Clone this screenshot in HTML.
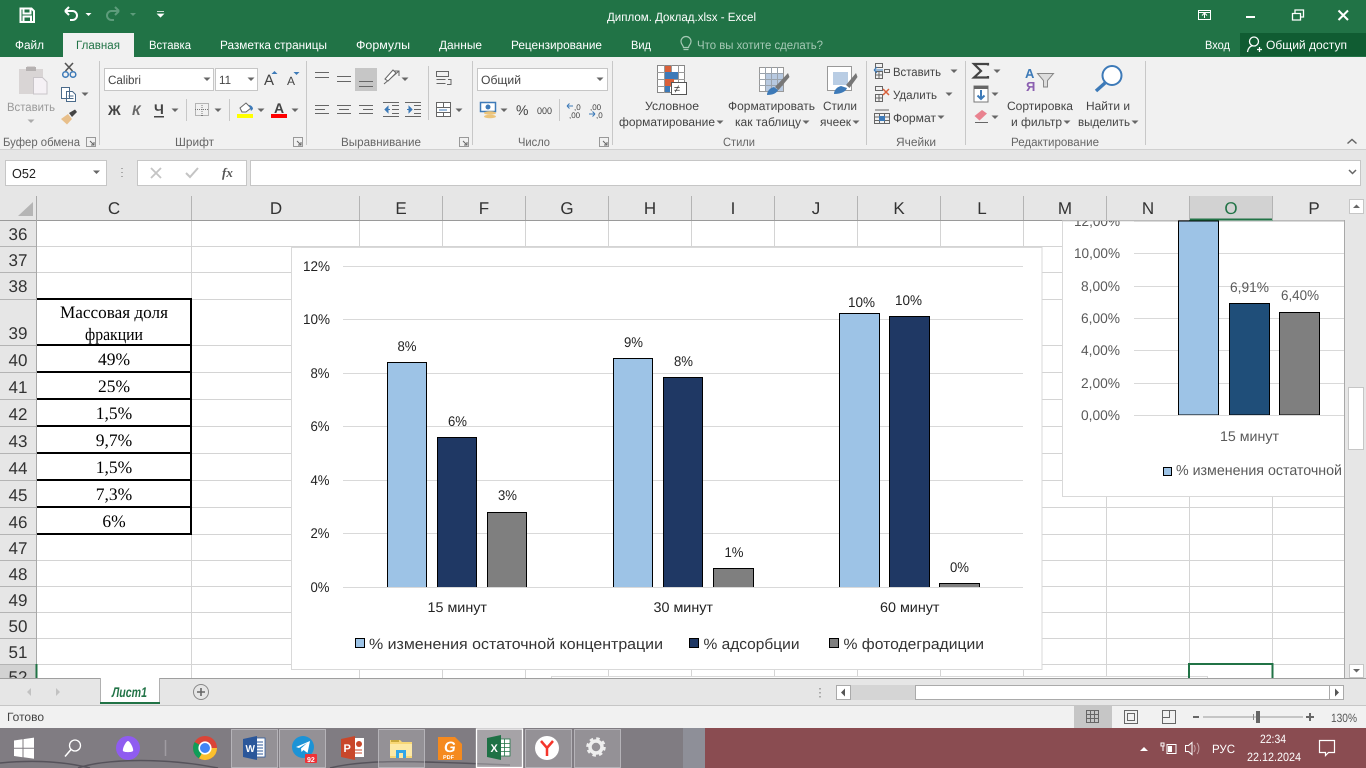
<!DOCTYPE html>
<html lang="ru"><head><meta charset="utf-8"><title>Диплом. Доклад.xlsx - Excel</title>
<style>
html,body{margin:0;padding:0;width:1366px;height:768px;overflow:hidden;background:#fff}
svg{display:block;font-family:"Liberation Sans",sans-serif}
.t{font-size:12px;fill:#444}
.l{font-size:12px;fill:#666}
.w{font-size:12px;fill:#fff}
.h{font-size:17px;fill:#333}
.c{font-size:14px;fill:#222}
.lg{font-size:15px;fill:#333}
.r{font-size:14px;fill:#595959}
.s{font-family:"Liberation Serif",serif;font-size:17.5px;fill:#000}
.k{fill:#444}
.a{fill:#666}
</style></head><body>
<svg width="1366" height="768" viewBox="0 0 1366 768" xmlns="http://www.w3.org/2000/svg" text-rendering="geometricPrecision">
<defs>
<g id="dd"><path d="M-3.500-1.500h7L0 2z" fill="#666"/></g>
<g id="lau"><path d="M-4.500-4.500h9v9h-9z" fill="none" stroke="#999"/><path d="M-1-1L3 3M3 0v3H0" fill="none" stroke="#666"/></g>
</defs>

<!-- title bar -->
<rect width="1366" height="57" fill="#217346"/>
<path d="M20.500 8.500h11l2.500 2.500v11h-13.500zM23.500 8.500v5h7v-5M23.500 22v-5.500h7.500V22" fill="none" stroke="#fff" stroke-width="2"/>
<path d="M65 11l4-4M65 11l4 4M65 11h7.500a4.500 4.500 0 0 1 0 9H70" fill="none" stroke="#fff" stroke-width="2"/>
<path d="M85.500 13h6l-3 3z" fill="#fff"/>
<path d="M119 11l-4-4M119 11l-4 4M119 11h-7.500a4.500 4.500 0 0 0 0 9H114" fill="none" stroke="#5d9c7b" stroke-width="2"/>
<path d="M130 13h6l-3 3z" fill="#5d9c7b"/>
<path d="M157 11.500h7M157.500 14h6l-3 3z" fill="#fff" stroke="#fff" stroke-width=".8"/>
<text class="w" x="607" y="21" textLength="149" lengthAdjust="spacingAndGlyphs">Диплом. Доклад.xlsx - Excel</text>
<path d="M1198.500 10.500h12v9h-12zM1198.500 12.500h12M1204.500 18v-4.500M1202 15.500l2.500-2.500 2.500 2.500" fill="none" stroke="#fff"/>
<rect x="1246" y="16" width="9" height="2" fill="#fff"/>
<path d="M1292.500 13.500h8v6.500h-8zM1295 13v-3h8.500v7h-3" fill="none" stroke="#fff" stroke-width="1.300"/>
<path d="M1338.500 10.500l9.500 9.500M1348 10.500L1338.500 20" stroke="#fff" stroke-width="2"/>

<!-- tabs -->
<rect x="63" y="33" width="71" height="24" fill="#f1f1f1"/>
<text class="w" x="15" y="49" textLength="29" lengthAdjust="spacingAndGlyphs">Файл</text>
<text x="76" y="49" font-size="12" fill="#217346" textLength="44" lengthAdjust="spacingAndGlyphs">Главная</text>
<text class="w" x="149" y="49" textLength="42" lengthAdjust="spacingAndGlyphs">Вставка</text>
<text class="w" x="220" y="49" textLength="107" lengthAdjust="spacingAndGlyphs">Разметка страницы</text>
<text class="w" x="356" y="49" textLength="54" lengthAdjust="spacingAndGlyphs">Формулы</text>
<text class="w" x="439" y="49" textLength="43" lengthAdjust="spacingAndGlyphs">Данные</text>
<text class="w" x="511" y="49" textLength="91" lengthAdjust="spacingAndGlyphs">Рецензирование</text>
<text class="w" x="631" y="49" textLength="20" lengthAdjust="spacingAndGlyphs">Вид</text>
<path d="M683.500 47.500c0-2-2.500-3-2.500-6a5 5 0 0 1 10 0c0 3-2.500 4-2.500 6zM683.500 49.500h5" fill="none" stroke="#a5c9b5" stroke-width="1.200"/>
<text x="697" y="49" font-size="12" fill="#a5c9b5" textLength="126" lengthAdjust="spacingAndGlyphs">Что вы хотите сделать?</text>
<text class="w" x="1205" y="49" textLength="25" lengthAdjust="spacingAndGlyphs">Вход</text>
<rect x="1240" y="33" width="126" height="23" fill="#105c32"/>
<circle cx="1254" cy="41.500" r="4.500" fill="none" stroke="#fff" stroke-width="1.300"/>
<path d="M1247.500 52c.5-4 3-6 5.500-6.500M1257 49.500h5M1259.500 47v5" fill="none" stroke="#fff" stroke-width="1.300"/>
<text class="w" x="1266" y="49" textLength="81" lengthAdjust="spacingAndGlyphs">Общий доступ</text>

<!-- ribbon -->
<rect y="57" width="1366" height="92" fill="#f1f1f1"/>
<rect y="149" width="1366" height="47" fill="#e6e6e6"/>
<rect y="149" width="1366" height="1" fill="#d0d0d0"/>
<g stroke="#c8c8c8"><path d="M99.500 61v84M306.500 61v84M472.500 61v84M612.500 61v84M866.500 61v84M965.500 61v84M1145.500 61v84"/></g>

<!-- clipboard -->
<path d="M19 69h8v-3h8v3h8v25H19z" fill="#d9d5d5"/><rect x="26" y="67" width="10" height="4" fill="#b5b1b1"/>
<path d="M33.500 77.500h9l4.500 4.500v12H33.500z" fill="#f5f1f5" stroke="#c9c5c9"/>
<text x="7" y="111" font-size="12" fill="#9a9a9a" textLength="48" lengthAdjust="spacingAndGlyphs">Вставить</text>
<use href="#dd" x="31" y="121" opacity=".5"/>
<path d="M65.500 71L73 63M72.500 71L65 63" stroke="#555" stroke-width="1.600"/>
<circle cx="65.500" cy="74.500" r="2.800" fill="none" stroke="#3d7ab8" stroke-width="1.500"/><circle cx="73" cy="74.500" r="2.800" fill="none" stroke="#3d7ab8" stroke-width="1.500"/>
<path d="M61.500 87.500h8v11h-8zM66.500 91.500h6l3 3v7h-9z" fill="#fff" stroke="#4a6a8a"/><path d="M68.500 96h5M68.500 98.500h5" stroke="#4a6a8a"/>
<use href="#dd" x="85" y="94"/>
<path d="M61 119l7-5 4 5-5 5.500z" fill="#e8bf8a"/><path d="M69 113l6-3.500 2 2.500-5 5z" fill="#444"/>
<text class="l" x="3" y="146" textLength="77" lengthAdjust="spacingAndGlyphs">Буфер обмена</text>
<use href="#lau" x="91" y="142"/>

<!-- font -->
<rect x="104.500" y="68.500" width="109" height="22" fill="#fff" stroke="#c6c6c6"/>
<rect x="215.500" y="68.500" width="42" height="22" fill="#fff" stroke="#c6c6c6"/>
<text class="t" x="108" y="84" textLength="33" lengthAdjust="spacingAndGlyphs">Calibri</text>
<text class="t" x="219" y="84" textLength="12" lengthAdjust="spacingAndGlyphs">11</text>
<use href="#dd" x="207" y="79"/><use href="#dd" x="251" y="79"/>
<text class="k" x="264" y="85" font-size="15">A</text><path d="M271.500 74h6l-3-3z" fill="#3d7ab8"/>
<text class="k" x="287" y="85" font-size="12">A</text><path d="M293.500 72h6l-3 3z" fill="#3d7ab8"/>
<text class="k" x="108" y="115" font-size="14" font-weight="bold">Ж</text>
<text x="132" y="115" font-size="14" font-weight="bold" font-style="italic" fill="#666">К</text>
<text class="k" x="154" y="114" font-size="14" font-weight="bold">Ч</text><rect x="154" y="116" width="10" height="1.500" fill="#444"/>
<use href="#dd" x="175" y="110"/><path d="M186.500 99v22M229.500 99v22" stroke="#c8c8c8"/>
<rect x="195.500" y="103.500" width="13" height="12" fill="none" stroke="#777" stroke-dasharray="1 1"/><path d="M202 103v13M195 109.500h14" stroke="#777" stroke-dasharray="1 1"/>
<use href="#dd" x="218" y="110"/>
<path d="M240 108l6-5 5 5-5 4h-4z" fill="#fff" stroke="#666"/><path d="M249 105c2 0 4 2 4 4l-2 2z" fill="#3d7ab8"/>
<rect x="237" y="114" width="16" height="4" fill="#ff0"/><use href="#dd" x="261" y="110"/>
<text class="k" x="274" y="113" font-size="14" font-weight="bold">A</text><rect x="271" y="114" width="16" height="4" fill="#f00"/><use href="#dd" x="295" y="110"/>
<text class="l" x="175" y="146" textLength="39" lengthAdjust="spacingAndGlyphs">Шрифт</text>
<use href="#lau" x="298" y="142"/>

<!-- align -->
<rect x="355" y="68" width="22" height="23" fill="#c6c6c6"/>
<g stroke="#666" fill="none">
<path d="M315 72.500h14M315 77.500h14M337 76.500h14M337 81.500h14M359 81.500h14M359 86.500h14"/>
<path d="M315 105.500h14M315 109.500h10M315 113.500h14M337 105.500h14M339 109.500h10M337 113.500h14M359 105.500h14M363 109.500h10M359 113.500h14"/>
<path d="M392 105.500h7M392 109.500h7M392 113.500h7M383 116.500h16M383 102.500h16M414 105.500h7M414 109.500h7M414 113.500h7M405 116.500h16M405 102.500h16"/>
<path d="M384 84l15-13M394 71h5v5"/><path d="M385 79l8-9 3 3-8 8z" fill="#fff"/>
<path d="M436.500 71.500h12v5h-12zM436.500 79.500h9M436.500 83.500h9M448 79.500h3v5h-4"/>
<rect x="436.500" y="102.500" width="14" height="14" fill="#fff"/><path d="M436.500 107.500h14M436.500 112.500h14M443.500 102.500v5M443.500 112.500v4"/>
</g>
<path d="M390 109.500l-5 0M385 109.500l3-3v6z" stroke="#3d7ab8" fill="#3d7ab8"/>
<path d="M407 109.500h5M412 109.500l-3-3v6z" stroke="#3d7ab8" fill="#3d7ab8"/>
<path d="M439 110h8" stroke="#3d7ab8"/>
<use href="#dd" x="405" y="79"/><use href="#dd" x="459" y="110"/><path d="M428.500 66v54" stroke="#c8c8c8"/>
<text class="l" x="341" y="146" textLength="80" lengthAdjust="spacingAndGlyphs">Выравнивание</text>
<use href="#lau" x="464" y="142"/>

<!-- number -->
<rect x="477.500" y="68.500" width="130" height="22" fill="#fff" stroke="#c6c6c6"/>
<text class="t" x="481" y="84" textLength="40" lengthAdjust="spacingAndGlyphs">Общий</text><use href="#dd" x="600" y="79"/>
<rect x="480.500" y="102.500" width="15" height="9" fill="#fff" stroke="#3d7ab8" stroke-width="1.500"/><circle cx="488" cy="107" r="2.500" fill="#3d7ab8"/>
<ellipse cx="490" cy="113" rx="6" ry="1.800" fill="#ecc47a"/><ellipse cx="490" cy="116.500" rx="6" ry="1.800" fill="#ecc47a"/>
<use href="#dd" x="504" y="110"/>
<text class="k" x="516" y="115" font-size="14">%</text>
<text class="k" x="537" y="114" font-size="9.500" textLength="15" lengthAdjust="spacingAndGlyphs">000</text>
<path d="M559.500 99v22" stroke="#c8c8c8"/>
<text class="k" x="574" y="110" font-size="8">,0</text><text class="k" x="569" y="118" font-size="8">,00</text>
<path d="M567 106h6M567 106l2.500-2.500M567 106l2.500 2.500" stroke="#3d7ab8" fill="none"/>
<text class="k" x="590" y="110" font-size="8">,00</text><text class="k" x="596" y="118" font-size="8">,0</text>
<path d="M589 114h6M595 114l-2.500-2.500M595 114l-2.500 2.500" stroke="#3d7ab8" fill="none"/>
<text class="l" x="518" y="146" textLength="32" lengthAdjust="spacingAndGlyphs">Число</text>
<use href="#lau" x="604" y="142"/>

<!-- styles -->
<rect x="657.500" y="65.500" width="27" height="27" fill="#fff" stroke="#888"/>
<path d="M664.500 65v28M671.500 65v28M678.500 65v28M657 72.500h28M657 79.500h28M657 86.500h28" stroke="#999"/>
<rect x="665" y="66" width="6" height="6" fill="#d9603a"/><rect x="665" y="72" width="13" height="7" fill="#3d7ab8"/><rect x="665" y="79" width="9" height="7" fill="#d9603a"/><rect x="665" y="86" width="5" height="6" fill="#3d7ab8"/>
<rect x="671.500" y="82.500" width="15" height="12" fill="#fff" stroke="#555"/><text x="674" y="92.500" font-size="11" fill="#333">≠</text>
<text class="t" x="645" y="110" textLength="54" lengthAdjust="spacingAndGlyphs">Условное</text>
<text class="t" x="619" y="126" textLength="96" lengthAdjust="spacingAndGlyphs">форматирование</text><use href="#dd" x="720" y="122"/>
<rect x="759.500" y="67.500" width="24" height="24" fill="#fff" stroke="#999"/><rect x="765" y="73" width="18" height="18" fill="#b7c9e0"/>
<path d="M759 73.500h24M759 79.500h24M759 85.500h24M765.500 67v24M771.500 67v24M777.500 67v24" stroke="#9aa3ad"/>
<path d="M775 87l13-14 1.500 4-11 13z" fill="#777"/><path d="M767 95c0-4 3-7 7-8l4 3c-1 3-5 5-11 5z" fill="#3d7ab8"/>
<text class="t" x="728" y="110" textLength="87" lengthAdjust="spacingAndGlyphs">Форматировать</text>
<text class="t" x="735" y="126" textLength="66" lengthAdjust="spacingAndGlyphs">как таблицу</text><use href="#dd" x="806" y="122"/>
<rect x="827.500" y="66.500" width="24" height="24" fill="#fff" stroke="#999"/><rect x="833" y="72" width="15" height="13" fill="#b9cde4"/>
<path d="M846 85l10-12 1.500 4-8 11z" fill="#777"/><path d="M834 94c0-4 3-7 7-8l6 2c-1 3-5 6-13 6z" fill="#3d7ab8"/>
<text class="t" x="823" y="110" textLength="34" lengthAdjust="spacingAndGlyphs">Стили</text>
<text class="t" x="820" y="126" textLength="31" lengthAdjust="spacingAndGlyphs">ячеек</text><use href="#dd" x="856" y="122"/>
<text class="l" x="723" y="146" textLength="32" lengthAdjust="spacingAndGlyphs">Стили</text>

<!-- cells -->
<g fill="none" stroke="#666">
<path d="M875.500 63.500h7v4h-7zM875.500 71.500h7v7h-7zM879 71.500v7M875.500 75h7M884.500 69.500h5v3h-5z"/>
<path d="M875.500 86.500h7v4h-7zM875.500 94.500h7v7h-7zM879 94.500v7M875.500 98h7"/>
<path d="M874.500 113.500h15v10h-15zM874.500 117h15M874.500 120.500h15M879.500 113.500v10M884.500 113.500v10M875 110h14"/>
</g>
<path d="M874 70h9M874 70l3-3M874 70l3 3" stroke="#3d7ab8" fill="none"/>
<path d="M883 89l6 6M889 89l-6 6" stroke="#d9603a" stroke-width="1.500"/>
<rect x="879" y="116" width="6" height="5" fill="#3d7ab8"/>
<text class="t" x="893" y="76" textLength="48" lengthAdjust="spacingAndGlyphs">Вставить</text><use href="#dd" x="954" y="71"/>
<text class="t" x="893" y="99" textLength="44" lengthAdjust="spacingAndGlyphs">Удалить</text><use href="#dd" x="949" y="94"/>
<text class="t" x="893" y="122" textLength="43" lengthAdjust="spacingAndGlyphs">Формат</text><use href="#dd" x="941" y="117"/>
<text class="l" x="896" y="146" textLength="40" lengthAdjust="spacingAndGlyphs">Ячейки</text>

<!-- editing -->
<path d="M988 65.500v-1.500h-14l7 7-7 6.500h14v-1.500" fill="none" stroke="#444" stroke-width="2.200"/><use href="#dd" x="997" y="71"/>
<rect x="974" y="86" width="14" height="16" fill="#fff" stroke="#777"/><rect x="974" y="86" width="14" height="3" fill="#666"/>
<path d="M981 90v9M977.500 95.500l3.500 3.500 3.500-3.500" fill="none" stroke="#3d7ab8" stroke-width="2"/><use href="#dd" x="995" y="94"/>
<path d="M974.500 116l7.500-6 5 3.500-7.500 7z" fill="#e9828f"/><path d="M975 122.500h13" stroke="#666"/><use href="#dd" x="995" y="117"/>
<text x="1025" y="78" font-size="13" font-weight="bold" fill="#3d7ab8">A</text>
<text x="1026" y="91" font-size="13" font-weight="bold" fill="#8b5fb0">Я</text>
<path d="M1037.500 73.500h16l-6 7v6.500h-4v-6.500z" fill="#ddd" stroke="#888"/>
<circle cx="1112" cy="75.500" r="9.500" fill="#fff" stroke="#3d7ab8" stroke-width="2"/><path d="M1105 83l-9 8" stroke="#3d7ab8" stroke-width="3.500"/>
<text class="t" x="1007" y="110" textLength="66" lengthAdjust="spacingAndGlyphs">Сортировка</text>
<text class="t" x="1011" y="126" textLength="51" lengthAdjust="spacingAndGlyphs">и фильтр</text><use href="#dd" x="1067" y="122"/>
<text class="t" x="1086" y="110" textLength="44" lengthAdjust="spacingAndGlyphs">Найти и</text>
<text class="t" x="1078" y="126" textLength="52" lengthAdjust="spacingAndGlyphs">выделить</text><use href="#dd" x="1135" y="122"/>
<text class="l" x="1011" y="146" textLength="88" lengthAdjust="spacingAndGlyphs">Редактирование</text>
<path d="M1347.500 143.500l4.500-4 4.500 4" fill="none" stroke="#666" stroke-width="1.500"/>

<!-- formula bar -->
<rect x="5.500" y="160.500" width="101" height="25" fill="#fff" stroke="#c6c6c6"/>
<text x="12" y="178" font-size="13" fill="#222" textLength="24" lengthAdjust="spacingAndGlyphs">O52</text>
<path d="M93 170.500h7l-3.500 3.500z" fill="#666"/>
<path d="M122 168v1M122 172v1M122 176v1" stroke="#aaa" stroke-width="2"/>
<rect x="137.500" y="160.500" width="109" height="25" fill="#fff" stroke="#c6c6c6"/>
<path d="M151 168l10 10M161 168l-10 10" stroke="#c4c4c4" stroke-width="1.800"/>
<path d="M186 173l4 4 8-9" fill="none" stroke="#c4c4c4" stroke-width="2"/>
<text x="222" y="177" font-size="13" font-family="Liberation Serif,serif" font-style="italic" font-weight="bold" fill="#555">fx</text>
<rect x="250.500" y="160.500" width="1110" height="25" fill="#fff" stroke="#c6c6c6"/>
<path d="M1349 170l3.500 3.500 3.500-3.500" fill="none" stroke="#666" stroke-width="1.500"/>

<!-- sheet grid -->
<rect y="196" width="1366" height="482" fill="#fff"/>
<rect y="196" width="1345" height="24" fill="#e6e6e6"/>
<rect x="0" y="220" width="36" height="458" fill="#e6e6e6"/>
<rect x="1189" y="196" width="84" height="24" fill="#d2d2d2"/>
<path d="M33 202v14H18z" fill="#b5b5b5"/>
<rect x="0" y="220" width="1345" height="1" fill="#9a9a9a"/>
<rect x="1189" y="218.500" width="84" height="2" fill="#217346"/>
<rect x="36" y="196" width="1" height="482" fill="#a8a8a8"/>
<g stroke="#b4b4b4">
<path d="M191.500 196v24M359.500 196v24M442.500 196v24M525.500 196v24M608.500 196v24M691.500 196v24M774.500 196v24M857.500 196v24M940.500 196v24M1023.500 196v24M1106.500 196v24M1189.500 196v24M1272.500 196v24"/>
<path d="M0 246.500h36M0 272.500h36M0 299.500h36M0 345.500h36M0 372.500h36M0 399.500h36M0 426.500h36M0 453.500h36M0 480.500h36M0 507.500h36M0 534.500h36M0 560.500h36M0 586.500h36M0 612.500h36M0 638.500h36M0 664.500h36"/>
</g>
<g stroke="#d4d4d4">
<path d="M37 246.500h1308M37 272.500h1308M37 299.500h1308M37 345.500h1308M37 372.500h1308M37 399.500h1308M37 426.500h1308M37 453.500h1308M37 480.500h1308M37 507.500h1308M37 534.500h1308M37 560.500h1308M37 586.500h1308M37 612.500h1308M37 638.500h1308M37 664.500h1308"/>
<path d="M191.500 221v457M359.500 221v457M442.500 221v457M525.500 221v457M608.500 221v457M691.500 221v457M774.500 221v457M857.500 221v457M940.500 221v457M1023.500 221v457M1106.500 221v457M1189.500 221v457M1272.500 221v457"/>
</g>
<g class="h" text-anchor="middle">
<text class="h" x="114" y="214">C</text><text class="h" x="276" y="214">D</text><text class="h" x="401" y="214">E</text><text class="h" x="484" y="214">F</text><text class="h" x="567" y="214">G</text><text class="h" x="650" y="214">H</text><text class="h" x="733" y="214">I</text><text class="h" x="816" y="214">J</text><text class="h" x="899" y="214">K</text><text class="h" x="982" y="214">L</text><text class="h" x="1065" y="214">M</text><text class="h" x="1148" y="214">N</text><text x="1231" y="214" font-size="17" fill="#217346">O</text><text class="h" x="1314" y="214">P</text>
<text class="h" x="18" y="240">36</text><text class="h" x="18" y="266">37</text><text class="h" x="18" y="292">38</text><text class="h" x="18" y="339">39</text><text class="h" x="18" y="366">40</text><text class="h" x="18" y="393">41</text><text class="h" x="18" y="420">42</text><text class="h" x="18" y="447">43</text><text class="h" x="18" y="474">44</text><text class="h" x="18" y="501">45</text><text class="h" x="18" y="528">46</text><text class="h" x="18" y="554">47</text><text class="h" x="18" y="580">48</text><text class="h" x="18" y="606">49</text><text class="h" x="18" y="632">50</text><text class="h" x="18" y="658">51</text>
</g>
<rect x="0" y="665" width="36" height="13" fill="#d2d2d2"/>
<clipPath id="cp52"><rect x="0" y="665" width="36" height="13"/></clipPath>
<text class="h" x="18" y="683" text-anchor="middle" clip-path="url(#cp52)">52</text>
<rect x="35.500" y="664" width="2" height="14" fill="#217346"/>

<!-- table -->
<path d="M37 299h154v235H37M37 345h154M37 372h154M37 399h154M37 426h154M37 453h154M37 480h154M37 507h154" fill="none" stroke="#000" stroke-width="2"/>
<g class="s" text-anchor="middle">
<text class="s" x="60" y="318" text-anchor="start" textLength="108" lengthAdjust="spacingAndGlyphs">Массовая доля</text>
<text class="s" x="85" y="340" text-anchor="start" textLength="58" lengthAdjust="spacingAndGlyphs">фракции</text>
<text class="s" x="114" y="365">49%</text><text class="s" x="114" y="392">25%</text><text class="s" x="114" y="419">1,5%</text><text class="s" x="114" y="446">9,7%</text><text class="s" x="114" y="473">1,5%</text><text class="s" x="114" y="500">7,3%</text><text class="s" x="114" y="527">6%</text>
</g>

<!-- chart 3 top edge -->
<rect x="551.500" y="676.500" width="656" height="4" fill="#fff" stroke="#d9d9d9"/>

<!-- second chart -->
<rect x="1062.500" y="221" width="290" height="275.500" fill="#fff" stroke="#d9d9d9"/>
<g stroke="#d9d9d9"><path d="M1134 253.500h211M1134 286.500h211M1134 318.500h211M1134 350.500h211M1134 383.500h211M1134 221.500h211"/></g>
<rect x="1178.500" y="221" width="40" height="194" fill="#9dc3e6" stroke="#000"/>
<rect x="1229.500" y="303.500" width="40" height="111.500" fill="#1f4e79" stroke="#000"/>
<rect x="1279.500" y="312.500" width="40" height="102.500" fill="#7f7f7f" stroke="#000"/>
<path d="M1134 415.500h211" stroke="#d9d9d9"/>
<clipPath id="cp2"><rect x="1062" y="221" width="283" height="276"/></clipPath>
<g clip-path="url(#cp2)">
<text class="r" x="1074" y="226" textLength="46" lengthAdjust="spacingAndGlyphs">12,00%</text>
<text class="r" x="1074" y="258" textLength="46" lengthAdjust="spacingAndGlyphs">10,00%</text>
<text class="r" x="1081" y="291" textLength="39" lengthAdjust="spacingAndGlyphs">8,00%</text>
<text class="r" x="1081" y="323" textLength="39" lengthAdjust="spacingAndGlyphs">6,00%</text>
<text class="r" x="1081" y="355" textLength="39" lengthAdjust="spacingAndGlyphs">4,00%</text>
<text class="r" x="1081" y="388" textLength="39" lengthAdjust="spacingAndGlyphs">2,00%</text>
<text class="r" x="1081" y="420" textLength="39" lengthAdjust="spacingAndGlyphs">0,00%</text>
<text class="r" x="1230" y="292" textLength="39" lengthAdjust="spacingAndGlyphs">6,91%</text>
<text class="r" x="1281" y="300" textLength="38" lengthAdjust="spacingAndGlyphs">6,40%</text>
<text class="r" x="1220" y="441" textLength="59" lengthAdjust="spacingAndGlyphs">15 минут</text>
<rect x="1163.500" y="467.500" width="8" height="8" fill="#9dc3e6" stroke="#000"/>
<text x="1176" y="475" font-size="14.500" fill="#595959" textLength="166" lengthAdjust="spacingAndGlyphs">% изменения остаточной</text>
</g>

<!-- main chart -->
<rect x="291.500" y="247.500" width="750.500" height="422" fill="#fff" stroke="#d9d9d9"/>
<g stroke="#d9d9d9"><path d="M343 266.500h680M343 319.500h680M343 373.500h680M343 426.500h680M343 480.500h680M343 533.500h680"/></g>
<g stroke="#000" stroke-width="1">
<rect x="387.500" y="362.500" width="39" height="225" fill="#9dc3e6"/>
<rect x="437.500" y="437.500" width="39" height="150" fill="#1f3864"/>
<rect x="487.500" y="512.500" width="39" height="75" fill="#7f7f7f"/>
<rect x="613.500" y="358.500" width="39" height="229" fill="#9dc3e6"/>
<rect x="663.500" y="377.500" width="39" height="210" fill="#1f3864"/>
<rect x="713.500" y="568.500" width="40" height="19" fill="#7f7f7f"/>
<rect x="839.500" y="313.500" width="40" height="274" fill="#9dc3e6"/>
<rect x="889.500" y="316.500" width="40" height="271" fill="#1f3864"/>
<rect x="939.500" y="583.500" width="40" height="4" fill="#7f7f7f"/>
</g>
<path d="M343 587.500h680" stroke="#d9d9d9"/>
<text class="c" x="303" y="271" textLength="27" lengthAdjust="spacingAndGlyphs">12%</text>
<text class="c" x="303" y="324" textLength="27" lengthAdjust="spacingAndGlyphs">10%</text>
<text class="c" x="310.500" y="378" textLength="19" lengthAdjust="spacingAndGlyphs">8%</text>
<text class="c" x="310.500" y="431" textLength="19" lengthAdjust="spacingAndGlyphs">6%</text>
<text class="c" x="310.500" y="485" textLength="19" lengthAdjust="spacingAndGlyphs">4%</text>
<text class="c" x="310.500" y="538" textLength="19" lengthAdjust="spacingAndGlyphs">2%</text>
<text class="c" x="310.500" y="592" textLength="19" lengthAdjust="spacingAndGlyphs">0%</text>
<text class="c" x="397.500" y="351" textLength="19" lengthAdjust="spacingAndGlyphs">8%</text>
<text class="c" x="448" y="426" textLength="19" lengthAdjust="spacingAndGlyphs">6%</text>
<text class="c" x="498" y="500" textLength="19" lengthAdjust="spacingAndGlyphs">3%</text>
<text class="c" x="624" y="347" textLength="19" lengthAdjust="spacingAndGlyphs">9%</text>
<text class="c" x="674" y="366" textLength="19" lengthAdjust="spacingAndGlyphs">8%</text>
<text class="c" x="724.500" y="557" textLength="19" lengthAdjust="spacingAndGlyphs">1%</text>
<text class="c" x="848" y="307" textLength="27" lengthAdjust="spacingAndGlyphs">10%</text>
<text class="c" x="895" y="305" textLength="27" lengthAdjust="spacingAndGlyphs">10%</text>
<text class="c" x="950" y="572" textLength="19" lengthAdjust="spacingAndGlyphs">0%</text>
<text class="c" x="427.500" y="612" textLength="59.500" lengthAdjust="spacingAndGlyphs">15 минут</text>
<text class="c" x="653.500" y="612" textLength="59.500" lengthAdjust="spacingAndGlyphs">30 минут</text>
<text class="c" x="880" y="612" textLength="59.500" lengthAdjust="spacingAndGlyphs">60 минут</text>
<g stroke="#000"><rect x="355.500" y="638.500" width="9" height="9" fill="#9dc3e6"/><rect x="689.500" y="638.500" width="9" height="9" fill="#1f3864"/><rect x="829.500" y="638.500" width="9" height="9" fill="#7f7f7f"/></g>
<text class="lg" x="369" y="649" textLength="294" lengthAdjust="spacingAndGlyphs">% изменения остаточной концентрации</text>
<text class="lg" x="703.500" y="649" textLength="96" lengthAdjust="spacingAndGlyphs">% адсорбции</text>
<text class="lg" x="843.500" y="649" textLength="140.500" lengthAdjust="spacingAndGlyphs">% фотодеградиции</text>

<!-- selected cell -->
<path d="M1189 678v-14h83.500v14" fill="none" stroke="#217346" stroke-width="2"/>

<!-- right scrollbar -->
<rect x="1345" y="196" width="21" height="482" fill="#e6e6e6"/>
<rect x="1344" y="220" width="1" height="458" fill="#a8a8a8"/>
<rect x="1349.500" y="199.500" width="14" height="14" fill="#fff" stroke="#c6c6c6"/>
<path d="M1353 208h7l-3.500-3.500z" fill="#666"/>
<rect x="1348.500" y="387.500" width="15" height="62" fill="#fff" stroke="#c6c6c6"/>
<rect x="1349.500" y="664.500" width="14" height="13" fill="#fff" stroke="#c6c6c6"/>
<path d="M1353 669h7l-3.500 3.500z" fill="#666"/>

<!-- sheet tabs -->
<rect y="678" width="1366" height="28" fill="#e6e6e6"/>
<rect y="678" width="1366" height="1" fill="#9f9f9f"/>
<rect x="100" y="678" width="60" height="25" fill="#fff"/>
<path d="M100.500 678v25M159.500 678v25" stroke="#b0b0b0"/>
<rect x="100" y="702" width="60" height="2" fill="#217346"/>
<text x="112" y="697" font-size="14" font-weight="bold" font-style="italic" fill="#217346" textLength="35" lengthAdjust="spacingAndGlyphs">Лист1</text>
<path d="M31 688v8l-4-4zM56 688v8l4-4z" fill="#c2c2c2"/>
<circle cx="201" cy="692" r="7.500" fill="none" stroke="#888"/><path d="M197 692h8M201 688v8" stroke="#666" stroke-width="1.600"/>
<path d="M820 688v1.500M820 692v1.500M820 696v1.500" stroke="#aaa" stroke-width="2"/>
<rect x="836" y="685" width="508" height="15" fill="#d5d5d5"/>
<rect x="836.500" y="685.500" width="14" height="14" fill="#fff" stroke="#aaa"/><path d="M845 688.500v8l-4-4z" fill="#555"/>
<rect x="915.500" y="685.500" width="414" height="14" fill="#fff" stroke="#aaa"/>
<rect x="1329.500" y="685.500" width="14" height="14" fill="#fff" stroke="#aaa"/><path d="M1335 688.500v8l4-4z" fill="#555"/>

<!-- status -->
<rect y="706" width="1366" height="22" fill="#f1f1f1"/>
<rect y="705" width="1366" height="1" fill="#c6c6c6"/>
<text x="7" y="721" font-size="12" fill="#444" textLength="37" lengthAdjust="spacingAndGlyphs">Готово</text>
<rect x="1074" y="706" width="38" height="22" fill="#c6c6c6"/>
<g fill="none" stroke="#666"><path d="M1086.500 710.500h12v12h-12zM1090.500 710.500v12M1094.500 710.500v12M1086.500 714.500h12M1086.500 718.500h12"/>
<path d="M1124.500 710.500h13v13h-13zM1127.500 713.500h7v7h-7z"/>
<path d="M1162.500 710.500h13v13h-13zM1169.500 710.500v7h-7"/></g>
<rect x="1193" y="716" width="6" height="2" fill="#666"/>
<rect x="1203" y="716.500" width="100" height="1" fill="#999"/>
<rect x="1256" y="711" width="4" height="12" fill="#666"/><rect x="1253" y="714" width="1" height="6" fill="#888"/>
<path d="M1306 717h8M1310 713v8" stroke="#666" stroke-width="2"/>
<text x="1331" y="722" font-size="12" fill="#555" textLength="26" lengthAdjust="spacingAndGlyphs">130%</text>

<!-- taskbar -->
<rect y="728" width="705" height="40" fill="#807c82"/>
<rect x="683" y="728" width="22" height="40" fill="#8e8f98"/>
<rect x="705" y="728" width="661" height="40" fill="#8a4c51"/>
<path d="M0 763c40-4 70 0 90 5M78 768c30-10 90-10 140 0M330 768c40-10 100-6 180-3" fill="none" stroke="#45424a" stroke-width="1.500" opacity=".7"/>
<g fill="#fff" fill-opacity=".16" stroke="#c8c6ca" stroke-opacity=".7">
<rect x="231.500" y="729.500" width="46" height="38"/><rect x="279.500" y="729.500" width="46" height="38"/><rect x="378.500" y="729.500" width="46" height="38"/><rect x="525.500" y="729.500" width="46" height="38"/><rect x="574.500" y="729.500" width="46" height="38"/>
</g>
<rect x="476.500" y="729" width="46" height="38.500" fill="#fff" fill-opacity=".3" stroke="#fff" stroke-width="1.300"/>
<path d="M14 740.500l8.500-1.200v8.500H14zM23.500 739.100l10.500-1.500v10.200H23.500zM14 748.800h8.500v8.400L14 756zM23.500 748.800H34v10l-10.500-1.500z" fill="#fff"/>
<circle cx="75" cy="745.500" r="5.500" fill="none" stroke="#fff" stroke-width="1.300"/><path d="M71 749.500l-6 7" stroke="#fff" stroke-width="1.500"/>
<circle cx="128" cy="748" r="12" fill="#8f5cf0"/><path d="M128 741c2 0 6 8 5 10-1 1.500-9 1.500-10 0-1-2 3-10 5-10z" fill="#fff"/>
<path d="M165.500 740v16" stroke="#a09ca2" stroke-width="1.500"/>
<circle cx="205" cy="748" r="12" fill="#db4437"/>
<path d="M205 748l-10.400-6A12 12 0 0 0 199 758.400z" fill="#0f9d58"/>
<path d="M205 748h12a12 12 0 0 1-18 10.400z" fill="#fbc02d"/>
<circle cx="205" cy="748" r="5.800" fill="#4285f4" stroke="#fff" stroke-width="1.600"/>
<!-- word -->
<rect x="254" y="738" width="11" height="19" fill="#fff" stroke="#2b579a" stroke-width=".8"/><path d="M256 742h7M256 745h7M256 748h7M256 751h7M256 754h7" stroke="#2b579a"/>
<path d="M243 739l14-3v24l-14-3z" fill="#2b579a"/><text x="245.500" y="752" font-size="10" font-weight="bold" fill="#fff">W</text>
<!-- telegram -->
<circle cx="303" cy="747" r="11" fill="#1c93d6"/><path d="M296 747l14-6-2.500 12-4-3-2 2-.5-3.500 6-5.500-8 5z" fill="#fff"/>
<rect x="305" y="754" width="12" height="9" rx="1" fill="#ee3137"/><text x="307" y="762" font-size="7" font-weight="bold" fill="#fff">92</text>
<!-- ppt -->
<rect x="353" y="738" width="11" height="19" fill="#fff"/><path d="M355 750h7M355 753h7" stroke="#c9472a"/><circle cx="359" cy="744" r="3" fill="#c9472a"/>
<path d="M341 739l14-3v24l-14-3z" fill="#c9472a"/><text x="343.500" y="752" font-size="11" font-weight="bold" fill="#fff">P</text>
<!-- explorer -->
<path d="M390 740h10l2 2h10v16h-22z" fill="#f8d775"/><rect x="390" y="744" width="22" height="12" fill="#fde9a5"/><rect x="396" y="750" width="10" height="8" fill="#32a6e8"/><rect x="399" y="753" width="4" height="5" fill="#fde9a5"/><rect x="391" y="740" width="8" height="2" fill="#c9a93b"/>
<!-- foxit -->
<path d="M438 737h17l7 7v16h-24z" fill="#f58a1f"/><text x="444" y="752" font-size="15" font-weight="bold" font-style="italic" fill="#fff">G</text><text x="443" y="759" font-size="5.500" font-weight="bold" fill="#fff">PDF</text>
<!-- excel -->
<rect x="499" y="739" width="11" height="17" fill="#fff" stroke="#217346" stroke-width=".8"/><path d="M499 743.500h11M499 747.500h11M499 751.500h11M504.500 739v17" stroke="#217346" stroke-width=".8"/>
<path d="M487 738l14-3v25l-14-3z" fill="#1e7145"/><text x="490.500" y="752" font-size="11" font-weight="bold" fill="#fff">X</text>
<!-- yandex -->
<circle cx="547" cy="748" r="12" fill="#fff"/><path d="M541 741l6 7 6-7M547 748v8" fill="none" stroke="#f5352b" stroke-width="2.500"/>
<!-- settings -->
<circle cx="596" cy="747" r="6" fill="none" stroke="#eee" stroke-width="3.500"/><circle cx="596" cy="747" r="8.500" fill="none" stroke="#eee" stroke-width="2.500" stroke-dasharray="3.500 3.170"/>
<!-- tray -->
<path d="M1140 751h8l-4-4z" fill="#fff"/>
<path d="M1161 743h3v3h-3zM1163 746v5M1167 744.500h9v9h-9z" fill="none" stroke="#fff"/><rect x="1168" y="746" width="4" height="6" fill="#fff"/>
<path d="M1185.500 745.500h3l3.500-3v12l-3.500-3h-3z" fill="none" stroke="#fff"/><path d="M1194 745c1.500 2 1.500 5 0 7M1197 743c2.500 3 2.500 8 0 11" fill="none" stroke="#c7a5a8"/>
<text x="1212" y="753" font-size="12" fill="#fff" textLength="23" lengthAdjust="spacingAndGlyphs">РУС</text>
<text x="1260" y="743" font-size="12" fill="#fff" textLength="26" lengthAdjust="spacingAndGlyphs">22:34</text>
<text x="1247" y="761" font-size="12" fill="#fff" textLength="54" lengthAdjust="spacingAndGlyphs">22.12.2024</text>
<path d="M1319.500 740.500h15v12h-6l-3 3v-3h-6z" fill="none" stroke="#fff" stroke-width="1.200"/>
</svg>
</body></html>
